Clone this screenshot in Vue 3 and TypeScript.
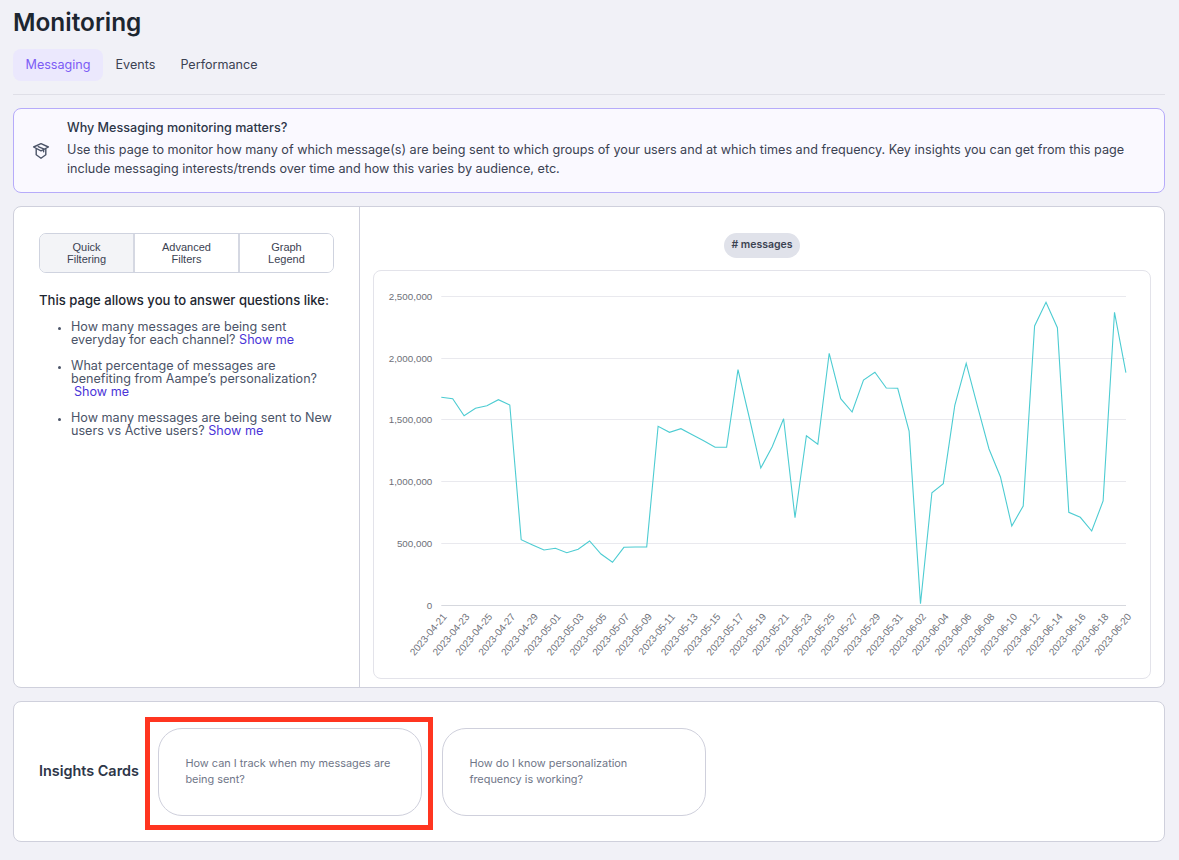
<script setup lang="ts">
const ys: number[] = [397.3,398.7,415.7,408.3,405.7,399.7,405,539.7,545,550,548.3,552.7,549.3,541,554,562.3,547.3,547,547,426.3,432.3,428.7,434.7,440.7,447.3,447.3,369.7,418,468,446.7,418.7,517.7,435.7,444.3,353.3,398.7,412,380,372.3,388,388.3,431,603.7,492.7,483.7,405.3,363.3,406.7,449,476.7,526,506,326,302.3,327.7,512.3,517.3,531,501,312.3,372.7]
const originX = 373
const originY = 270
const x0 = 441.3 - originX
const step = 11.41
const points = ys.map((y, i) => `${(x0 + i * step).toFixed(1)},${(y - originY).toFixed(1)}`).join(' ')
const yAxis = [
  { label: '2,500,000', y: 26 },
  { label: '2,000,000', y: 88 },
  { label: '1,500,000', y: 149 },
  { label: '1,000,000', y: 211 },
  { label: '500,000', y: 273 },
  { label: '0', y: 335 },
]
const start = Date.UTC(2023, 3, 21)
const dates = Array.from({ length: 31 }, (_, i) => ({
  label: new Date(start + i * 2 * 86400000).toISOString().slice(0, 10),
  x: x0 + i * 2 * step,
}))
const tabs = ['Messaging', 'Events', 'Performance']
const filters = [['Quick', 'Filtering'], ['Advanced', 'Filters'], ['Graph', 'Legend']]
</script>

<template>
  <div class="page">
    <h1 class="title">Monitoring</h1>
    <nav class="tabs">
      <span v-for="(t, i) in tabs" :key="t" class="tab" :class="{ active: i === 0 }">{{ t }}</span>
    </nav>
    <div class="divider"></div>

    <section class="banner">
      <svg class="cap" viewBox="0 0 18 18" fill="none" stroke="#4b5468" stroke-width="1.4" stroke-linejoin="round" stroke-linecap="round">
        <path d="M9 1.6 16.4 5 9 8.8 1.6 5Z" />
        <path d="M4.2 7v5.8L9 16.2l4.8-3.4V7" />
        <path d="M6.2 4.6 11.6 6.8v3" />
      </svg>
      <div class="banner-body">
        <h2 class="banner-title">Why Messaging monitoring matters?</h2>
        <p class="banner-text">Use this page to monitor how many of which message(s) are being sent to which groups of your users and at which times and frequency. Key insights you can get from this page include messaging interests/trends over time and how this varies by audience, etc.</p>
      </div>
    </section>

    <section class="main">
      <aside class="side">
        <div class="segments">
          <button v-for="(f, i) in filters" :key="f[0]" class="segment" :class="{ selected: i === 0, wide: i === 1 }">{{ f[0] }}<br />{{ f[1] }}</button>
        </div>
        <h3 class="side-title">This page allows you to answer questions like:</h3>
        <ul class="questions">
          <li>How many messages are being sent everyday for each channel? <a>Show me</a></li>
          <li>What percentage of messages are benefiting from Aampe’s personalization?<br /><a class="indent">Show me</a></li>
          <li>How many messages are being sent to New users vs Active users? <a>Show me</a></li>
        </ul>
      </aside>
      <div class="graph">
        <div class="legend-row"><span class="chip"># messages</span></div>
        <div class="chart">
          <svg width="778" height="409" viewBox="0 0 778 409">
            <g v-for="a in yAxis" :key="a.label">
              <line :x1="x0" x2="753" :y1="a.y + 0.5" :y2="a.y + 0.5" :stroke="a.label === '0' ? '#d6d8de' : '#e9e9ee'" />
              <text :x="x0 - 9" :y="a.y + 3.6" text-anchor="end" class="axis">{{ a.label }}</text>
            </g>
            <g v-for="d in dates" :key="d.label">
              <text class="axis date" text-anchor="end" :transform="`translate(${d.x + 6} ${347}) rotate(-50)`">{{ d.label }}</text>
            </g>
            <polyline :points="points" fill="none" stroke="#4dccd2" stroke-width="1.1" />
          </svg>
        </div>
      </div>
    </section>

    <section class="insights">
      <h3 class="insights-title">Insights Cards</h3>
      <div class="card-slot">
        <div class="card">How can I track when my messages are being sent?</div>
        <div class="mark"></div>
      </div>
      <div class="card second">How do I know personalization frequency is working?</div>
    </section>
  </div>
</template>

<style>
html, body { margin: 0; background: #f1f1f7; }
</style>

<style scoped>
.page {
  box-sizing: border-box;
  width: 1179px;
  height: 860px;
  padding: 0 14px 0 13px;
  overflow: hidden;
  background: #f1f1f7;
  font-family: Inter, "Noto Sans", sans-serif;
  color: #2d3648;
}
.title {
  margin: 0;
  padding-top: 7px;
  height: 49px;
  box-sizing: border-box;
  font-size: 24.4px;
  line-height: 30px;
  font-weight: 600;
  color: #1d2630;
}
.tabs { display: flex; margin-top: 0; height: 32px; }
.tab {
  padding: 0 12.5px;
  font-size: 12.6px;
  line-height: 32px;
  color: #3b4252;
  border-radius: 8px;
}
.tab.active { background: #ebe8fd; color: #7c5cf5; }
.divider { height: 1px; margin-top: 13px; background: #dfdfe7; }
.banner {
  display: flex;
  align-items: center;
  gap: 17px;
  box-sizing: border-box;
  height: 85px;
  margin-top: 13px;
  padding: 0 12px 0 18px;
  background: #faf9ff;
  border: 1px solid #b6abfa;
  border-radius: 8px;
}
.cap { width: 18px; height: 18px; flex: none; }
.banner-body { margin-top: -6px; }
.banner-title { margin: 0 0 3px; font-size: 12.6px; line-height: 19px; font-weight: 500; color: #2d3648; }
.banner-text { margin: 0; font-size: 12.64px; line-height: 19px; color: #3b4252; }
.main {
  display: flex;
  box-sizing: border-box;
  height: 482px;
  margin-top: 13px;
  background: #fff;
  border: 1px solid #cfd0dc;
  border-radius: 8px;
}
.side {
  box-sizing: border-box;
  width: 346px;
  flex: none;
  padding: 26px 25px 0;
  border-right: 1px solid #cfd0dc;
}
.segments {
  display: flex;
  height: 40px;
  width: 295px;
  box-sizing: border-box;
  border: 1px solid #cfd3df;
  border-radius: 7px;
  overflow: hidden;
}
.segment {
  flex: 95 1 0;
  padding: 0;
  background: #fff;
  border: 0;
  border-right: 2px solid #d5d8e2;
  font-family: "Liberation Sans", Arial, sans-serif;
  font-size: 11px;
  line-height: 12px;
  color: #3b4252;
}
.segment.wide { flex-grow: 105; }
.segment:last-child { border-right: 0; }
.segment.selected { background: #f3f4f7; }
.side-title { margin: 19px 0 0; font-size: 13.1px; line-height: 16px; font-weight: 500; color: #1d2630; }
.questions { margin: 12px 0 0; padding: 0 0 0 32px; font-size: 12.6px; line-height: 13px; color: #4b5468; }
.questions li { margin-bottom: 13px; }
.questions li::marker { font-size: 10px; }
.questions a { color: #4a35d8; }
.questions a.indent { margin-left: 3px; }
.graph { flex: 1; min-width: 0; display: flex; flex-direction: column; padding: 26px 13px 8px; }
.legend-row { display: flex; justify-content: center; height: 25px; margin-bottom: 12px; }
.chip {
  padding: 0 7px;
  font-size: 10.5px;
  line-height: 24px;
  height: 25px;
  font-weight: 600;
  color: #3b4252;
  background: #e0e2ea;
  border-radius: 13px;
}
.chart {
  box-sizing: border-box;
  height: 409px;
  border: 1px solid #e3e3ea;
  border-radius: 8px;
  overflow: hidden;
}
.chart svg { display: block; margin: -1px 0 0 -1px; }
.axis { font-family: "Liberation Sans", Arial, sans-serif; font-size: 9.8px; fill: #6e7079; }
.date { font-size: 10px; }
.insights {
  display: flex;
  align-items: center;
  box-sizing: border-box;
  height: 141px;
  margin-top: 13px;
  padding: 0 25px;
  background: #fff;
  border: 1px solid #cfd0dc;
  border-radius: 8px;
}
.insights-title { margin: -2px 19px 0 0; font-size: 14.4px; font-weight: 600; color: #2d3648; white-space: nowrap; }
.card-slot { position: relative; }
.card {
  box-sizing: border-box;
  display: flex;
  align-items: center;
  width: 264px;
  height: 88px;
  padding: 0 26.5px 2px;
  font-size: 10.9px;
  line-height: 16px;
  color: #6f7688;
  background: #fff;
  border: 1px solid #cfd0dc;
  border-radius: 24px;
}
.second { margin-left: 20px; }
.mark {
  position: absolute;
  left: -13px;
  top: -11px;
  width: 288px;
  height: 113px;
  box-sizing: border-box;
  border: 5px solid #ff3520;
  pointer-events: none;
}
</style>
